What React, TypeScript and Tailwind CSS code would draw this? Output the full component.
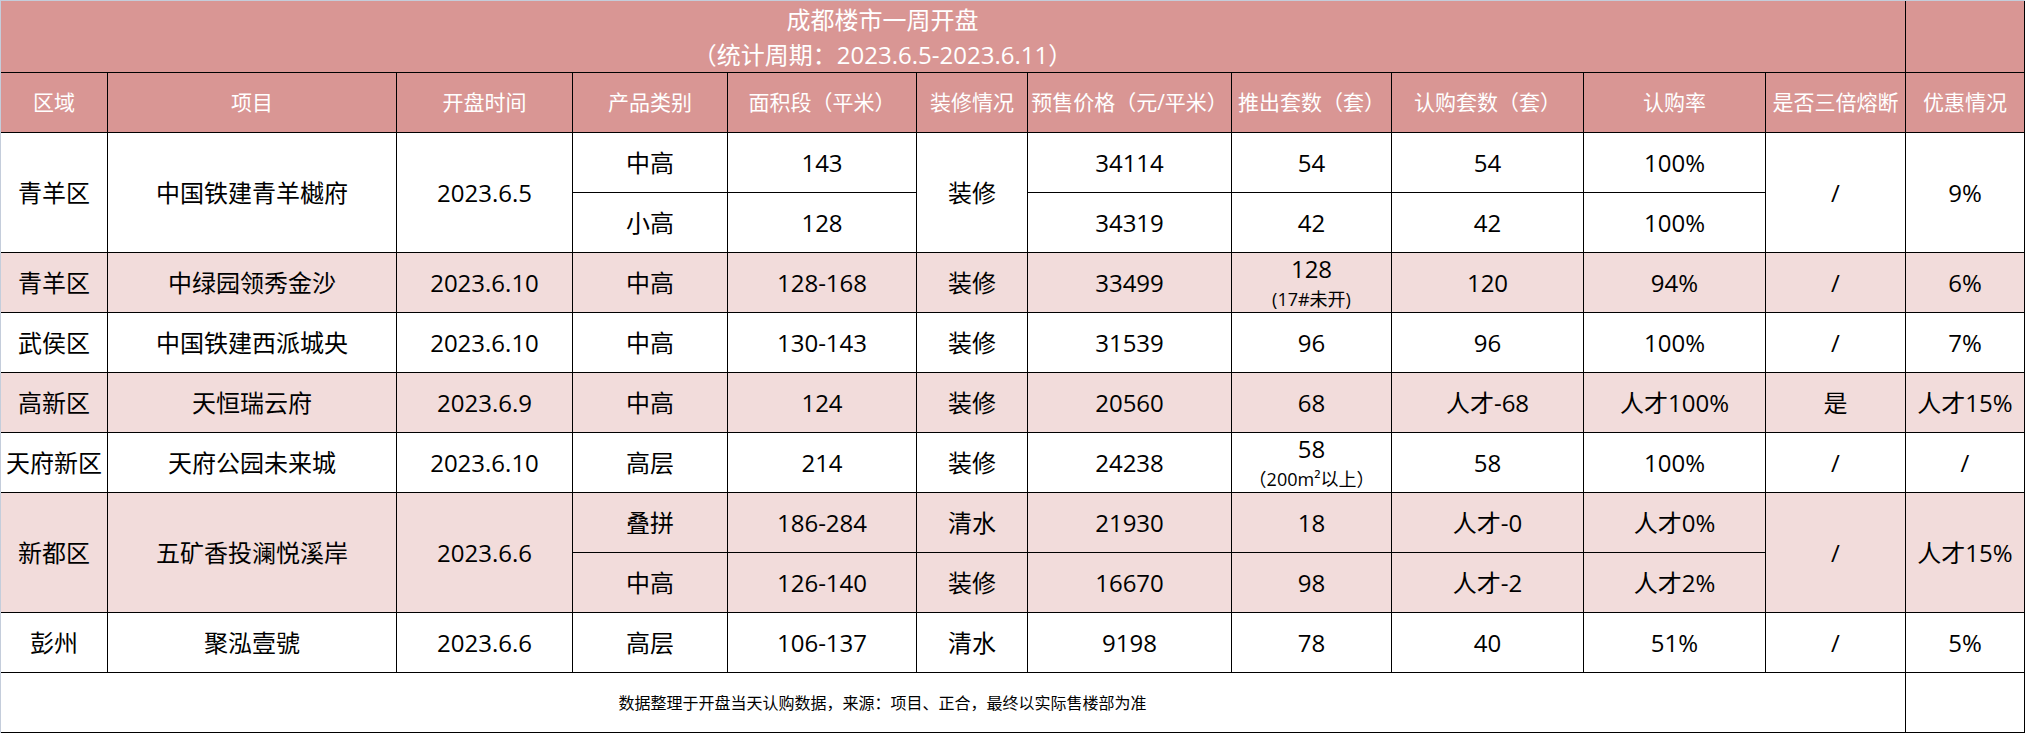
import { ReactNode } from "react";
import clsx from "clsx";

type CellProps = { children?: ReactNode; className?: string };

function Cell({ children, className }: CellProps) {
  return (
    <div className={clsx("flex items-center justify-center border-r border-b border-black text-center whitespace-nowrap", className)}>
      {children}
    </div>
  );
}

// number with a small note underneath (推出套数)
function Noted({ main, note }: { main: string; note: string }) {
  return (
    <div className="flex flex-col items-center pt-[2px]">
      <span className="leading-[30px]">{main}</span>
      <span className="text-[18px] leading-[30px]">{note}</span>
    </div>
  );
}

const headers = [
  "区域",
  "项目",
  "开盘时间",
  "产品类别",
  "面积段（平米）",
  "装修情况",
  "预售价格（元/平米）",
  "推出套数（套）",
  "认购套数（套）",
  "认购率",
  "是否三倍熔断",
  "优惠情况",
];

type Row = (string | ReactNode)[];

const singles: { pink: boolean; cells: Row }[] = [
  {
    pink: true,
    cells: ["青羊区", "中绿园领秀金沙", "2023.6.10", "中高", "128-168", "装修", "33499", <Noted main="128" note="(17#未开)" />, "120", "94%", "/", "6%"],
  },
  {
    pink: false,
    cells: ["武侯区", "中国铁建西派城央", "2023.6.10", "中高", "130-143", "装修", "31539", "96", "96", "100%", "/", "7%"],
  },
  {
    pink: true,
    cells: ["高新区", "天恒瑞云府", "2023.6.9", "中高", "124", "装修", "20560", "68", "人才-68", "人才100%", "是", "人才15%"],
  },
  {
    pink: false,
    cells: ["天府新区", "天府公园未来城", "2023.6.10", "高层", "214", "装修", "24238", <Noted main="58" note="（200m²以上）" />, "58", "100%", "/", "/"],
  },
];

export default function App() {
  return (
    <div className="w-[2025px] h-[733px] bg-white border-l border-t border-[#c4cddb] font-['Open_Sans','Noto_Sans_CJK_SC',sans-serif] text-[24px] text-black">
      <div className="grid grid-cols-[107px_289px_176px_155px_189px_111px_204px_160px_192px_182px_140px_119px] grid-rows-[72px_repeat(11,60px)]">
        {/* title */}
        <Cell className="col-span-11 flex-col bg-[#d99694] text-white pr-[141px] leading-[35px]">
          <span>成都楼市一周开盘</span>
          <span>（统计周期：2023.6.5-2023.6.11）</span>
        </Cell>
        <Cell className="bg-[#d99694]" />

        {/* header */}
        {headers.map((h) => (
          <Cell key={h} className="bg-[#d99694] text-white text-[21px]">
            {h}
          </Cell>
        ))}

        {/* 青羊区 中国铁建青羊樾府 */}
        <Cell className="row-span-2 bg-white">青羊区</Cell>
        <Cell className="row-span-2 bg-white">中国铁建青羊樾府</Cell>
        <Cell className="row-span-2 bg-white">2023.6.5</Cell>
        <Cell className="bg-white">中高</Cell>
        <Cell className="bg-white">143</Cell>
        <Cell className="row-span-2 bg-white">装修</Cell>
        <Cell className="bg-white">34114</Cell>
        <Cell className="bg-white">54</Cell>
        <Cell className="bg-white">54</Cell>
        <Cell className="bg-white">100%</Cell>
        <Cell className="row-span-2 bg-white">/</Cell>
        <Cell className="row-span-2 bg-white">9%</Cell>
        <Cell className="bg-white">小高</Cell>
        <Cell className="bg-white">128</Cell>
        <Cell className="bg-white">34319</Cell>
        <Cell className="bg-white">42</Cell>
        <Cell className="bg-white">42</Cell>
        <Cell className="bg-white">100%</Cell>

        {singles.map((r, i) =>
          r.cells.map((c, j) => (
            <Cell key={`${i}-${j}`} className={r.pink ? "bg-[#f2dcdb]" : "bg-white"}>
              {c}
            </Cell>
          ))
        )}

        {/* 新都区 五矿香投澜悦溪岸 */}
        <Cell className="row-span-2 bg-[#f2dcdb]">新都区</Cell>
        <Cell className="row-span-2 bg-[#f2dcdb]">五矿香投澜悦溪岸</Cell>
        <Cell className="row-span-2 bg-[#f2dcdb]">2023.6.6</Cell>
        <Cell className="bg-[#f2dcdb]">叠拼</Cell>
        <Cell className="bg-[#f2dcdb]">186-284</Cell>
        <Cell className="bg-[#f2dcdb]">清水</Cell>
        <Cell className="bg-[#f2dcdb]">21930</Cell>
        <Cell className="bg-[#f2dcdb]">18</Cell>
        <Cell className="bg-[#f2dcdb]">人才-0</Cell>
        <Cell className="bg-[#f2dcdb]">人才0%</Cell>
        <Cell className="row-span-2 bg-[#f2dcdb]">/</Cell>
        <Cell className="row-span-2 bg-[#f2dcdb]">人才15%</Cell>
        <Cell className="bg-[#f2dcdb]">中高</Cell>
        <Cell className="bg-[#f2dcdb]">126-140</Cell>
        <Cell className="bg-[#f2dcdb]">装修</Cell>
        <Cell className="bg-[#f2dcdb]">16670</Cell>
        <Cell className="bg-[#f2dcdb]">98</Cell>
        <Cell className="bg-[#f2dcdb]">人才-2</Cell>
        <Cell className="bg-[#f2dcdb]">人才2%</Cell>

        {/* 彭州 */}
        {["彭州", "聚泓壹號", "2023.6.6", "高层", "106-137", "清水", "9198", "78", "40", "51%", "/", "5%"].map((c, j) => (
          <Cell key={`pz-${j}`} className="bg-white">
            {c}
          </Cell>
        ))}

        {/* footer */}
        <Cell className="col-span-11 bg-white text-[16px] pr-[141px]">
          数据整理于开盘当天认购数据，来源：项目、正合，最终以实际售楼部为准
        </Cell>
        <Cell className="bg-white" />
      </div>
    </div>
  );
}
